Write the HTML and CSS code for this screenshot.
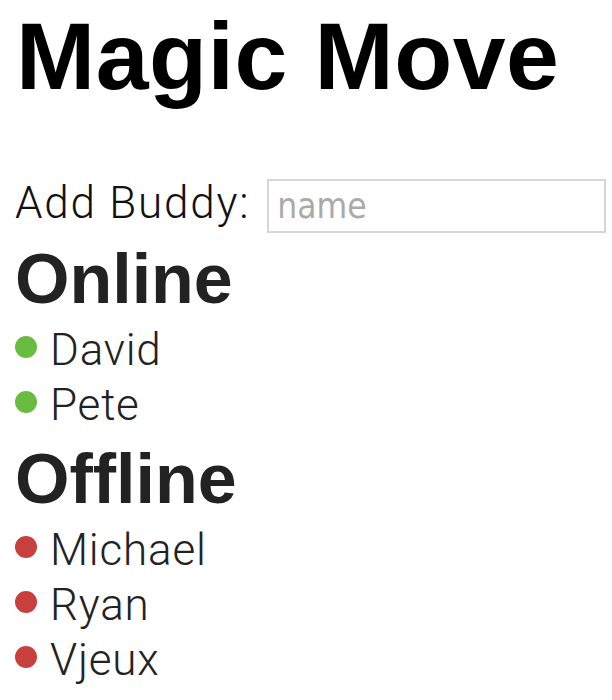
FILE: index.html
```html
<!DOCTYPE html>
<html>
<head>
<meta charset="utf-8">
<title>Magic Move</title>
<link rel="stylesheet" href="styles.css">
</head>
<body>
<div class="page">
  <h1 class="title">Magic Move</h1>
  <div class="add-row">
    <label class="add-label" for="buddy">Add Buddy:</label>
    <input class="add-input" id="buddy" type="text" placeholder="name">
  </div>
  <h2 class="section-title">Online</h2>
  <ul class="buddy-list">
    <li class="buddy"><span class="dot dot-online"></span><span class="buddy-name">David</span></li>
    <li class="buddy"><span class="dot dot-online"></span><span class="buddy-name">Pete</span></li>
  </ul>
  <h2 class="section-title">Offline</h2>
  <ul class="buddy-list">
    <li class="buddy"><span class="dot dot-offline"></span><span class="buddy-name">Michael</span></li>
    <li class="buddy"><span class="dot dot-offline"></span><span class="buddy-name">Ryan</span></li>
    <li class="buddy"><span class="dot dot-offline"></span><span class="buddy-name">Vjeux</span></li>
  </ul>
</div>
</body>
</html>
```

FILE: styles.css
```css
html, body {
  margin: 0;
  padding: 0;
  background: #ffffff;
}

.page {
  display: flex;
  flex-direction: column;
  padding: 0 6px 0 15px;
  font-family: Roboto, "Liberation Sans", sans-serif;
  color: #222222;
}

.title {
  margin: 0;
  font-family: "Liberation Sans", Arial, sans-serif;
  font-weight: 700;
  font-size: 95px;
  line-height: 112px;
  letter-spacing: 0.5px;
  color: #000000;
  padding-left: 1px;
}

.add-row {
  display: flex;
  align-items: center;
  gap: 17px;
  margin-top: 67px;
  height: 54px;
}

.add-label {
  font-family: Roboto, "Liberation Sans", sans-serif;
  font-weight: 300;
  font-size: 44px;
  line-height: 54px;
  letter-spacing: 1.8px;
  color: #111111;
  white-space: nowrap;
  position: relative;
  top: -3px;
}

.add-input {
  flex: 1;
  min-width: 0;
  height: 54px;
  box-sizing: border-box;
  margin: 0;
  padding: 0 8px;
  border: 2px solid #d6d6d6;
  border-radius: 0;
  outline: none;
  background: #ffffff;
  font-family: "Liberation Sans Narrow", "DejaVu Sans Condensed", sans-serif;
  font-size: 35px;
  color: #333333;
}

.add-input::placeholder {
  color: #aaaaaa;
}

.section-title {
  margin: 2px 0 0 0;
  font-family: "Liberation Sans", Arial, sans-serif;
  font-weight: 700;
  font-size: 70px;
  line-height: 88px;
  color: #222222;
}

.buddy-list {
  list-style: none;
  margin: 0;
  padding: 0;
  display: flex;
  flex-direction: column;
}

.buddy {
  display: flex;
  align-items: center;
  gap: 13px;
  height: 55px;
}

.dot {
  flex: none;
  width: 22px;
  height: 22px;
  border-radius: 50%;
  position: relative;
  top: -4px;
}

.dot-online {
  background: #68bd41;
}

.dot-offline {
  background: #c8403e;
}

.buddy-name {
  font-family: Roboto, "Liberation Sans", sans-serif;
  font-weight: 300;
  font-size: 44px;
  line-height: 55px;
  letter-spacing: 0.8px;
  color: #222222;
}
```
